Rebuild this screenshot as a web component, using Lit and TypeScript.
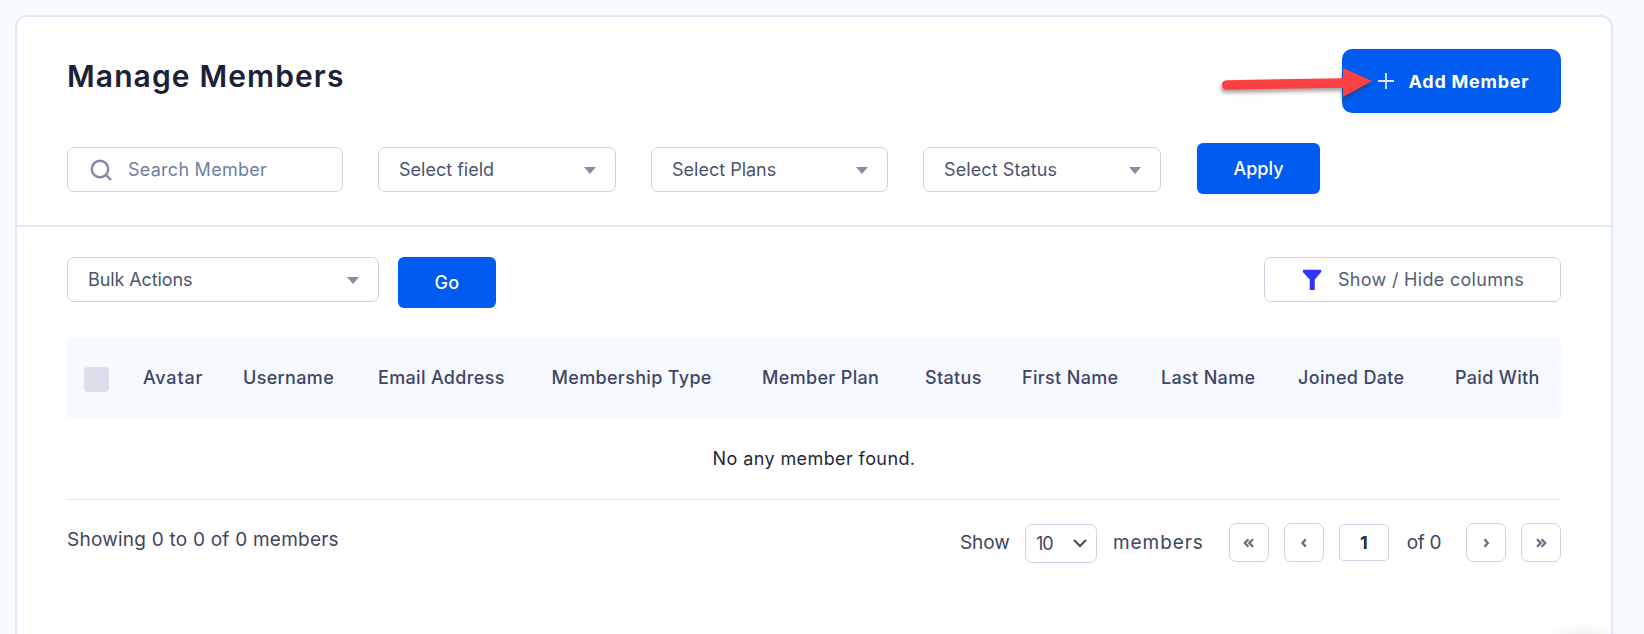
import { LitElement, html, css, svg } from "lit";
import { customElement } from "lit/decorators.js";

const COLUMNS = ["Avatar", "Username", "Email Address", "Membership Type", "Member Plan", "Status", "First Name", "Last Name", "Joined Date", "Paid With"];

const caret = html`<span class="caret"></span>`;

const chev = (d: string) => html`<svg class="chev" viewBox="0 0 14 14" width="14" height="14">${svg`<path d=${d} fill="none" stroke="#667085" stroke-width="2.3"/>`}</svg>`;

@customElement("app-root")
export class AppRoot extends LitElement {
  static styles = css`
    :host { display: block; height: 634px; overflow: hidden; background: #f7faff; font-family: Inter, "Liberation Sans", sans-serif; }
    .page { padding: 15px 31px 0 15px; }
    .card { position: relative; background: #fff; border: 2px solid #e1e9f7; border-radius: 12px; min-height: 640px; box-sizing: border-box; }
    .top { padding: 32px 50px 31px; border-bottom: 2px solid #e1e9f7; }
    .title-row { display: flex; justify-content: space-between; align-items: flex-start; }
    h1 { margin: 7px 0 0; font-size: 30px; line-height: 40px; font-weight: 600; letter-spacing: 1.12px; color: #1a2238; }
    .primary { border: 0; background: #005cf0; color: #fff; font-family: inherit; display: flex; align-items: center; justify-content: center; padding: 0; }
    .add { width: 219px; height: 64px; border-radius: 10px; font-size: 18px; font-weight: 700; letter-spacing: .75px; gap: 15px; padding-left: 4px; box-sizing: border-box; }
    .add svg { display: block; }
    .apply, .go { height: 51px; border-radius: 6px; font-size: 18px; font-weight: 500; }
    .apply { width: 123px; }
    .go { width: 98px; letter-spacing: .3px; }
    .filters { display: flex; gap: 35px; align-items: flex-start; margin-top: 30px; }
    .field { height: 45px; box-sizing: border-box; border: 1px solid #cdd3e2; border-radius: 7px; background: #fff; display: flex; align-items: center; font-size: 18px; color: #4a5470; }
    .filters .field { margin-top: 4px; }
    .search { width: 276px; padding-left: 21px; gap: 15px; color: #6e80a4; letter-spacing: .26px; }
    .select { width: 238px; padding: 0 19px 0 20px; justify-content: space-between; }
    .plans { width: 237px; }
    .status { margin-right: 1px; letter-spacing: .1px; }
    .bulk { width: 312px; letter-spacing: -.1px; }
    .caret { width: 0; height: 0; border-left: 6px solid transparent; border-right: 6px solid transparent; border-top: 7px solid #8a89a6; margin-top: 1px; }
    .bottom { padding: 30px 50px 0; }
    .toolbar { display: flex; align-items: flex-start; gap: 19px; }
    .columns { margin-left: auto; width: 297px; padding-left: 38px; gap: 16px; letter-spacing: .3px; color: #545c73; }
    .columns svg { flex: none; }
    .head { margin-top: 30px; height: 80px; box-sizing: border-box; background: #f6f9ff; display: grid; grid-template-columns: 59px 100px 135px 173.5px 210.5px 163px 97px 139px 137px 157px 1fr; align-items: center; padding: 0 0 2px 17px; font-size: 18px; font-weight: 500; letter-spacing: .33px; color: #3d4663; white-space: nowrap; }
    .head .wide { letter-spacing: .8px; }
    .check { width: 25px; height: 25px; border-radius: 4px; background: #d9e0ec; margin-top: 5px; }
    .empty { height: 82px; box-sizing: border-box; border-bottom: 1px solid #e3e9f3; display: flex; align-items: center; justify-content: center; font-size: 18px; letter-spacing: .4px; color: #1f2937; }
    .foot { display: flex; justify-content: space-between; align-items: flex-start; margin-top: 23px; font-size: 19px; color: #3e4660; }
    .showing { margin-top: 3px; line-height: 27px; letter-spacing: .23px; }
    .pager { display: flex; align-items: center; }
    .show { margin-right: 15px; }
    .size { width: 72px; height: 39px; box-sizing: border-box; border: 1px solid #cdd3e2; border-radius: 7px; display: flex; align-items: center; justify-content: space-between; padding: 0 9px 0 10px; font-size: 18px; letter-spacing: -1px; margin-right: 16px; transform: translateY(1px); }
    .members { letter-spacing: .95px; margin-right: 25px; }
    .nav { width: 40px; height: 39px; box-sizing: border-box; border: 1px solid #cdd3e2; border-radius: 7px; display: flex; align-items: center; justify-content: center; margin-right: 15px; }
    .nav.last { margin-right: 0; }
    .page-no { width: 50px; height: 37px; box-sizing: border-box; border: 1px solid #cdd3e2; border-radius: 5px; display: flex; align-items: center; justify-content: center; font-size: 18px; font-weight: 700; color: #2b2f4a; margin-right: 18px; }
    .of { margin-right: 25px; letter-spacing: -.4px; }
    .arrow { position: absolute; left: 1195px; top: 44px; pointer-events: none; overflow: visible; filter: drop-shadow(-1px 3px 2px rgba(60,30,30,.45)); }
    .glow { position: absolute; left: 1526px; top: 604px; width: 80px; height: 40px; background: radial-gradient(closest-side, rgba(120,120,130,.12), transparent); pointer-events: none; }
  `;

  render() {
    return html`
      <div class="page">
        <div class="card">
          <section class="top">
            <div class="title-row">
              <h1>Manage Members</h1>
              <button class="primary add">
                <svg viewBox="0 0 16 16" width="16" height="16"><path d="M8 0v16M0 8h16" stroke="#dfe8fb" stroke-width="1.8" fill="none"/></svg>
                Add Member
              </button>
            </div>
            <div class="filters">
              <div class="field search">
                <svg viewBox="0 0 24 24" width="24" height="24"><circle cx="11" cy="11" r="8.200" fill="none" stroke="#8486a8" stroke-width="2.400"/><path d="M17 17l5 5" stroke="#8486a8" stroke-width="2.400" fill="none"/></svg>
                Search Member
              </div>
              <div class="field select">Select field${caret}</div>
              <div class="field select plans">Select Plans${caret}</div>
              <div class="field select status">Select Status${caret}</div>
              <button class="primary apply">Apply</button>
            </div>
          </section>
          <section class="bottom">
            <div class="toolbar">
              <div class="field select bulk">Bulk Actions${caret}</div>
              <button class="primary go">Go</button>
              <div class="field columns">
                <svg viewBox="0 0 19 21" width="19" height="21"><path d="M0 1h18v2l-6.500 7.500V21H7V10.500L0 3z" fill="#3333ff" stroke="#3333ff" stroke-width=".5"/></svg>
                Show / Hide columns
              </div>
            </div>
            <div class="head">
              <span class="check"></span>
              ${COLUMNS.map((c, i) => html`<span class=${i === 0 ? "wide" : ""}>${c}</span>`)}
            </div>
            <div class="empty">No any member found.</div>
            <div class="foot">
              <div class="showing">Showing 0 to 0 of 0 members</div>
              <div class="pager">
                <span class="show">Show</span>
                <span class="size">10
                  <svg viewBox="0 0 14 9" width="14" height="9"><path d="M1 1l6 6 6-6" fill="none" stroke="#444a5c" stroke-width="2"/></svg>
                </span>
                <span class="members">members</span>
                <span class="nav">${chev("M6.500 3.200L2.800 7l3.700 3.800M11 3.200L7.300 7l3.700 3.800")}</span>
                <span class="nav">${chev("M8.800 3.200L5.500 7l3.300 3.800")}</span>
                <span class="page-no">1</span>
                <span class="of">of 0</span>
                <span class="nav">${chev("M5.500 3.200L8.800 7l-3.300 3.800")}</span>
                <span class="nav last">${chev("M3 3.200L6.700 7 3 10.800M7.500 3.200L11.200 7l-3.700 3.800")}</span>
              </div>
            </div>
          </section>
          <svg class="arrow" width="160" height="40" viewBox="0 0 160 40">
            <path d="M14.500 24L131 22" stroke="#fb4144" stroke-width="9.500" stroke-linecap="round" fill="none"/>
            <path d="M131 7L160 20 131 36z" fill="#fb4144"/>
          </svg>
          <div class="glow"></div>
        </div>
      </div>
    `;
  }
}
